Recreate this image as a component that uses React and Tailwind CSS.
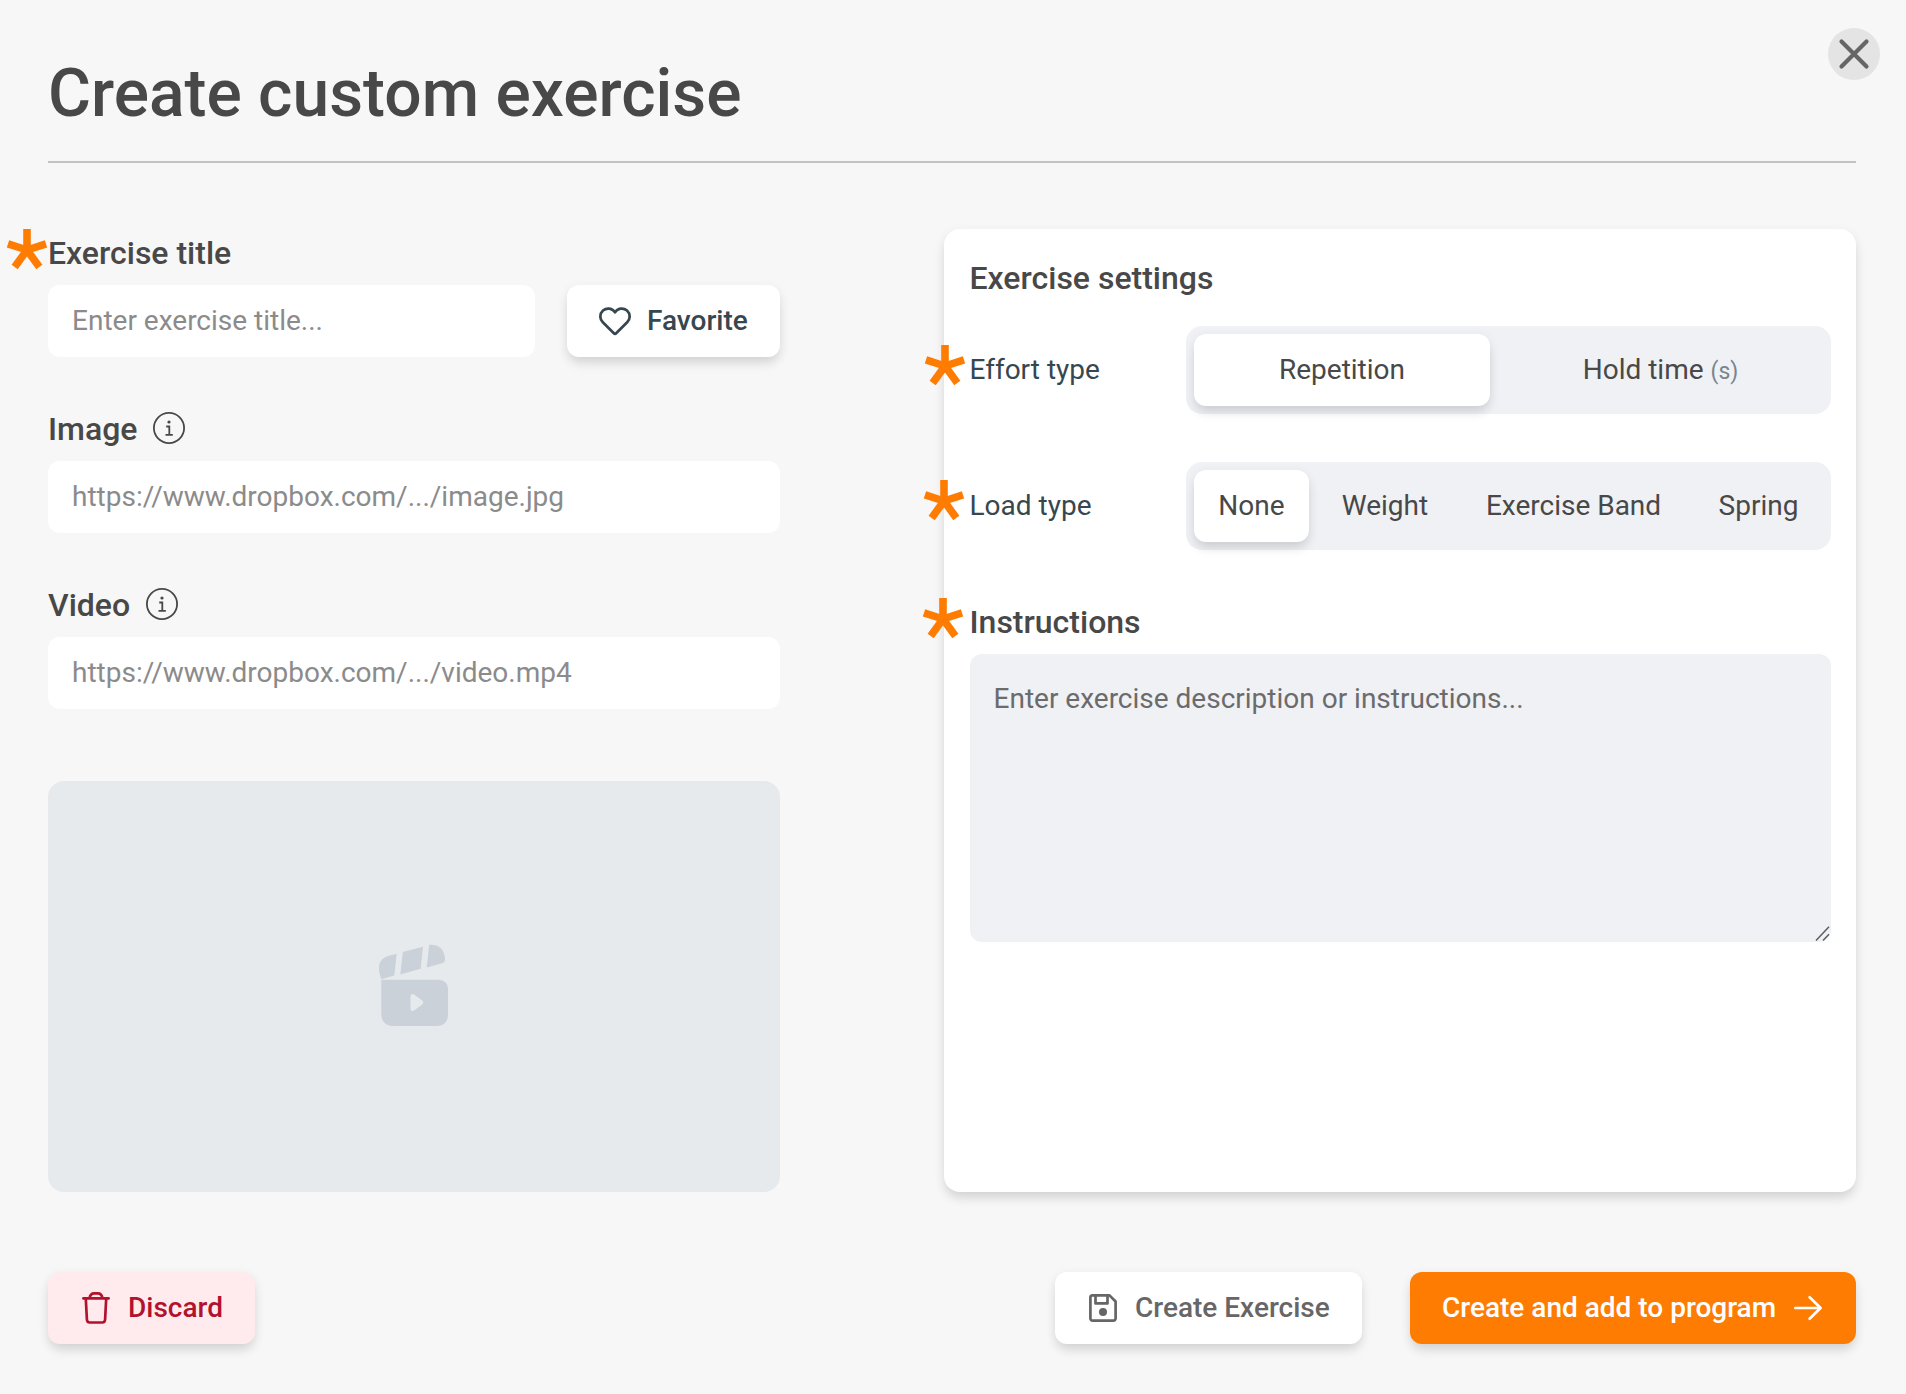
import React from 'react';

const SHADOW = 'shadow-[0_8px_12px_-2px_rgba(0,0,0,0.1),0_3px_12px_rgba(0,0,0,0.07)]';

function Required({ className }) {
  return (
    <svg className={`absolute w-11 h-11 ${className}`} viewBox="-22 -22 44 44" stroke="#ff7c02" strokeWidth="7.6">
      <path d="M0 0V-21" />
      <path d="M0 0V-20" transform="rotate(72)" />
      <path d="M0 0V-21" transform="rotate(144)" />
      <path d="M0 0V-21" transform="rotate(216)" />
      <path d="M0 0V-20" transform="rotate(288)" />
    </svg>
  );
}

function InfoIcon() {
  return (
    <svg className="w-8 h-8" viewBox="0 0 32 32" fill="none" stroke="#484848" strokeWidth="1.8">
      <circle cx="16" cy="16" r="15.1" />
      <path d="M13.2 14.5h3.1v8.4M12.5 22.9h7.3" />
      <circle cx="16" cy="10" r="1.6" fill="#484848" stroke="none" />
    </svg>
  );
}

function HeartIcon() {
  return (
    <svg className="w-8 h-8" viewBox="0 0 32 32" fill="none" stroke="currentColor" strokeWidth="2.7" strokeLinejoin="round">
      <path d="M16 7.400C13.400 3 7.600 2.400 4 5.600C.5 8.800.5 14 3.800 17.300L14.600 28C15.400 28.800 16.600 28.800 17.400 28L28.200 17.300C31.500 14 31.500 8.800 28 5.600C24.400 2.400 18.600 3 16 7.400Z" />
    </svg>
  );
}

function TrashIcon() {
  return (
    <svg className="w-8 h-8" viewBox="0 0 32 32" fill="none" stroke="currentColor" strokeWidth="2.7" strokeLinecap="round" strokeLinejoin="round">
      <path d="M3.4 6.4h25.2M9.5 6.2c.6-3 2.2-4.8 4.6-4.8h3.8c2.4 0 4 1.8 4.6 4.8" />
      <path d="M5.8 6.6l1.1 20.9c.1 1.9 1 3 2.8 3h12.6c1.8 0 2.7-1.1 2.8-3l1.1-20.9" />
    </svg>
  );
}

function SaveIcon() {
  return (
    <svg className="w-8 h-8" viewBox="0 0 32 32" fill="none" stroke="currentColor" strokeWidth="2.7" strokeLinejoin="round">
      <path d="M5.6 3.4h16.9l6.1 6.1v16.9a2.2 2.2 0 0 1-2.2 2.2H5.6a2.2 2.2 0 0 1-2.2-2.2V5.6a2.2 2.2 0 0 1 2.2-2.2Z" />
      <path d="M8.5 3.6v7.8h12V3.6" />
      <circle cx="16" cy="20" r="4" fill="currentColor" stroke="none" />
    </svg>
  );
}

function ArrowIcon() {
  return (
    <svg className="w-8 h-8" viewBox="0 0 32 32" fill="none" stroke="currentColor" strokeWidth="2.7" strokeLinecap="round" strokeLinejoin="round">
      <path d="M3.3 16h25.2M17.6 5.2L28.6 16 17.6 26.8" />
    </svg>
  );
}

function ClapperIcon() {
  return (
    <svg className="w-[72px] h-[84px] mb-[2px]" viewBox="38 24 72 84" fill="#cad1d9">
      <path d="M41.2 59.2c-1.3-3.8-2.2-7.6-2.2-11.4 0-6.6 4.2-10 9-11.7l8.7-2.4-2.4 21.9Z" />
      <path d="M62.8 32l20.2-5.2-2.4 22-20.3 5.6Z" />
      <path d="M89.2 24.8c9-.6 14 3.3 15.6 12.2.6 3.6-.2 5.600-3.600 6.600l-14.500 3.900Z" />
      <path
        fillRule="evenodd"
        d="M41.3 59.7H98c6.5 0 10 3.5 10 9.6v24.5c0 8.500-4 12.200-12 12.200H54c-8 0-12.700-4-12.700-12.200ZM70.500 76.500v12c0 2.300 1.700 3.200 3.500 1.900l8-5.700c1.600-1.200 1.600-3.200 0-4.400l-8-5.700c-1.800-1.300-3.500-.4-3.500 1.900Z"
      />
    </svg>
  );
}

function Segment({ className, active, children }) {
  return (
    <button className={`h-[72px] rounded-xl text-[28px] text-[#484848] ${className} ${active ? `bg-white ${SHADOW}` : ''}`}>
      {children}
    </button>
  );
}

function UrlField({ label, placeholder }) {
  return (
    <div className="mt-[47px]">
      <div className="flex items-center gap-4 h-12 text-[32px] font-medium">
        <span className="pt-[2px]">{label}</span>
        <InfoIcon />
      </div>
      <input
        className="block mt-[9px] w-full h-[72px] px-6 pb-[2px] rounded-xl bg-white text-[28px] placeholder:text-[#8b8b8b]"
        placeholder={placeholder}
      />
    </div>
  );
}

export default function App() {
  return (
    <div className="relative w-[1906px] h-[1394px] overflow-hidden bg-[#f7f7f7] pl-12 pr-[50px] font-['Roboto',sans-serif] text-[#484848]">
      <button className="absolute left-[1828px] top-7 w-[52px] h-[52px] rounded-full bg-[#e4e4e4]">
        <svg className="w-[52px] h-[52px]" viewBox="0 0 52 52" stroke="#666" strokeWidth="4.2" strokeLinecap="round">
          <path d="M13.500 13.500l25 25M38.500 13.500l-25 25" />
        </svg>
      </button>

      <h1 className="h-[163px] pt-[55px] border-b-2 border-[#c2c2c2] text-[65.9px] leading-[77px] font-medium">
        Create custom exercise
      </h1>

      <div className="flex justify-between pt-[66px]">
        {/* left column */}
        <div className="w-[732px]">
          <div className="relative h-12 text-[32px] leading-[48px] font-medium">
            Exercise title
            <Required className="-left-[43px] -top-[1px]" />
          </div>
          <div className="flex gap-8 mt-2">
            <input
              className="w-[487px] h-[72px] px-6 pb-[2px] rounded-xl bg-white text-[28px] placeholder:text-[#8b8b8b]"
              placeholder="Enter exercise title..."
            />
            <button className={`flex items-center gap-4 w-[213px] h-[72px] pl-8 rounded-xl bg-white text-[28px] font-medium text-[#37474f] ${SHADOW}`}>
              <HeartIcon />
              Favorite
            </button>
          </div>
          <UrlField label="Image" placeholder="https://www.dropbox.com/.../image.jpg" />
          <UrlField label="Video" placeholder="https://www.dropbox.com/.../video.mp4" />
          <div className="flex items-center justify-center mt-[72px] h-[411px] rounded-2xl bg-[#e6eaed]">
            <ClapperIcon />
          </div>
        </div>

        {/* settings card */}
        <div className={`w-[912px] h-[963px] pl-[25.5px] pr-[25px] pt-[25px] rounded-2xl bg-white ${SHADOW}`}>
          <h2 className="h-12 text-[32px] leading-[48px] font-medium">Exercise settings</h2>

          <div className="relative flex items-center justify-between mt-6 text-[28px] text-[#37474f]">
            Effort type
            <Required className="-left-[47px] top-[18px]" />
            <div className="flex gap-2 p-2 w-[645px] h-[88px] rounded-2xl bg-[#f0f1f5]">
              <Segment className="w-[296px]" active>Repetition</Segment>
              <Segment className="w-[325px]">
                Hold time <span className="text-[23px] text-[#78868e]">(s)</span>
              </Segment>
            </div>
          </div>

          <div className="relative flex items-center justify-between mt-12 text-[28px] text-[#37474f]">
            Load type
            <Required className="-left-[48px] top-[17px]" />
            <div className="flex gap-2 p-2 w-[645px] h-[88px] rounded-2xl bg-[#f0f1f5]">
              <Segment className="w-[115px]" active>None</Segment>
              <Segment className="w-[136px]">Weight</Segment>
              <Segment className="w-[225px]">Exercise Band</Segment>
              <Segment className="w-[129px]">Spring</Segment>
            </div>
          </div>

          <div className="relative mt-12 h-12 text-[32px] leading-[48px] font-medium">
            Instructions
            <Required className="-left-[49px] -top-[1px]" />
          </div>
          <div className="relative mt-2">
            <textarea
              className="block w-full h-[288px] px-6 pt-[25px] rounded-xl bg-[#f0f1f5] text-[28px] leading-[40px] resize-none placeholder:text-[#6b6b6b]"
              placeholder="Enter exercise description or instructions..."
            />
            <svg className="absolute right-0 bottom-0 w-4 h-4" viewBox="0 0 16 16" stroke="#5c5d60" strokeWidth="1.500">
              <path d="M1 14.500L14 .8M8 14.500L14 8.300" />
            </svg>
          </div>
        </div>
      </div>

      <div className="flex items-center mt-20 text-[28px] font-medium">
        <button className={`flex items-center gap-4 w-[207px] h-[72px] pl-8 rounded-xl bg-[#ffebee] text-[#b3122d] ${SHADOW}`}>
          <TrashIcon />
          Discard
        </button>
        <button className={`flex items-center gap-4 w-[307px] h-[72px] pl-8 ml-auto rounded-xl bg-white text-[#666] ${SHADOW}`}>
          <SaveIcon />
          Create Exercise
        </button>
        <button className={`flex items-center gap-4 w-[446px] h-[72px] pl-8 ml-12 rounded-xl bg-[#ff7c02] text-white ${SHADOW}`}>
          Create and add to program
          <ArrowIcon />
        </button>
      </div>
    </div>
  );
}
